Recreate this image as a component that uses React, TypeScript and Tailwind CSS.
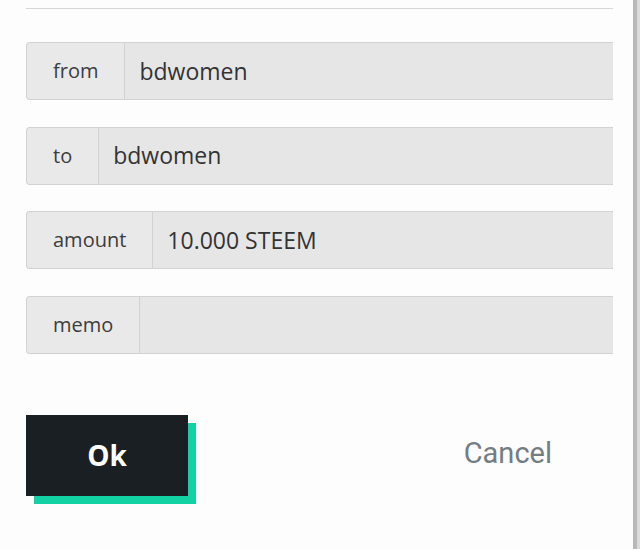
import React from 'react';

const fields = [
  { label: 'from', value: 'bdwomen' },
  { label: 'to', value: 'bdwomen' },
  { label: 'amount', value: '10.000 STEEM' },
  { label: 'memo', value: '' },
];

export default function App() {
  return (
    <div className="flex h-[549px] w-full bg-[#fdfdfd] overflow-hidden">
      <div className="min-w-0 flex-1 pl-[26px] pr-[20px] pt-[8px]">
        <hr className="border-0 border-t border-[#d6d6d6]" />

        <div className="mt-[33px] flex flex-col gap-[26.5px]">
          {fields.map(f => (
            <div
              key={f.label}
              className="flex h-[58px] rounded-l-[4px] border border-r-0 border-[#d2d2d2] bg-[#e6e6e6] font-['Open_Sans',sans-serif]"
            >
              <div className="flex items-center px-[26px] border-r border-[#d2d2d2] bg-[#e9e9e9] rounded-l-[4px] text-[20px] text-[#3c3c3c]">
                {f.label}
              </div>
              <div className="flex flex-1 items-center pl-[14px] text-[23px] text-[#333333]">
                {f.value}
              </div>
            </div>
          ))}
        </div>

        <div className="mt-[61px] flex items-start">
          <div className="relative h-[89px] w-[170px]">
            <div className="absolute left-[8px] top-[8px] h-[81px] w-[162px] bg-[#12d1a3]" />
            <button className="absolute left-0 top-0 flex h-[81px] w-[162px] items-center justify-center bg-[#1a1f24] text-white text-[28px] font-bold font-['Open_Sans',sans-serif]">
              Ok
            </button>
          </div>
          <button className="ml-auto mr-[61px] mt-[20px] text-[29px] text-[#747c84] font-['Roboto',sans-serif] leading-[36px]">
            Cancel
          </button>
        </div>
      </div>
      <div className="flex h-full w-[7px] shrink-0">
        <div className="w-[4px] bg-[#b8b8b8]" />
        <div className="flex-1 bg-[#dcdcdc]" />
      </div>
    </div>
  );
}
